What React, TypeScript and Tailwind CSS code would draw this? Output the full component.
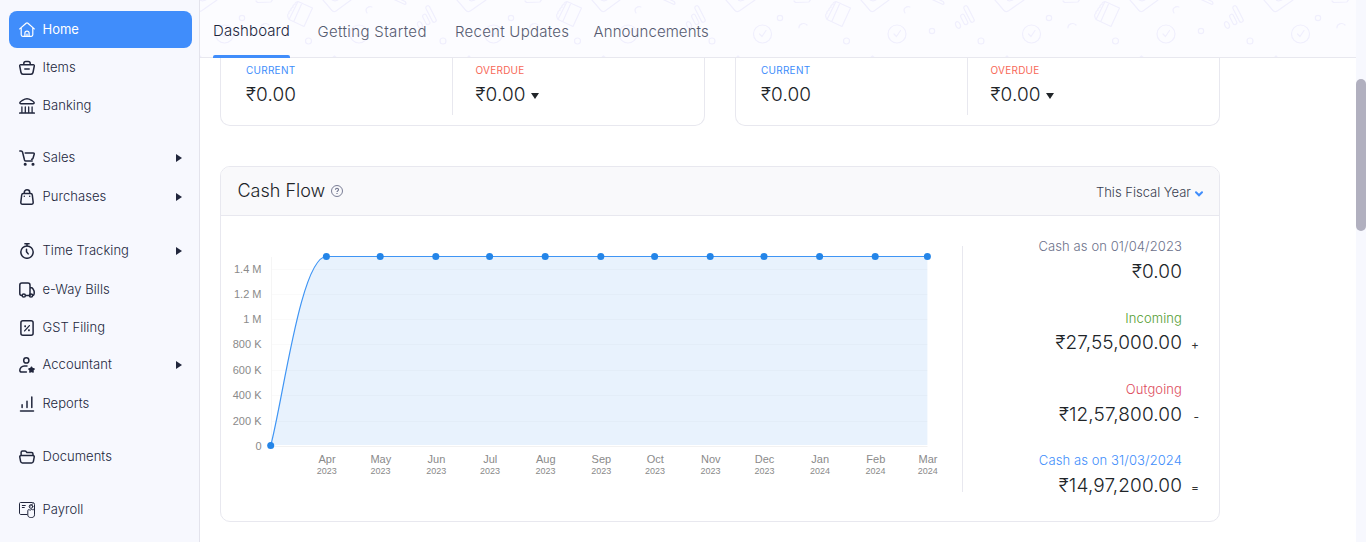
import React from "react";

type NavItem = { label: string; icon: React.ReactNode; gap?: string; arrow?: boolean; active?: boolean };

const Icon = ({ children }: { children: React.ReactNode }) => (
  <svg
    width="16"
    height="16"
    viewBox="0 0 16 16"
    fill="none"
    stroke="currentColor"
    strokeWidth="1.5"
    strokeLinecap="round"
    strokeLinejoin="round"
    className="shrink-0"
  >
    {children}
  </svg>
);

const nav: NavItem[] = [
  {
    label: "Home",
    active: true,
    icon: (
      <svg
        width="16"
        height="16"
        viewBox="0 0 16 16"
        fill="none"
        stroke="currentColor"
        strokeWidth="1.2"
        strokeLinecap="round"
        strokeLinejoin="round"
        className="shrink-0"
      >
        <path d="M.7 6.9 7.1 1.2a1.4 1.4 0 0 1 1.8 0l6.4 5.7M2.2 6v6.8c0 .9.6 1.5 1.5 1.5h8.6c.9 0 1.5-.6 1.5-1.5V6" />
        <path d="M5.9 14.1v-3c0-1.1.8-1.9 2.1-1.9s2.1.8 2.1 1.9v3M8 12v2" />
      </svg>
    ),
  },
  {
    label: "Items",
    icon: (
      <Icon>
        <path d="M1.7 4.8h12.6c.7 0 1.1.5 1 1.1l-1.3 6.6c-.2 1-1 1.7-2 1.7H4c-1 0-1.8-.7-2-1.7L.7 5.9c-.1-.6.3-1.1 1-1.1ZM4.8 4.6V3.4c0-1.1.9-2 2-2h2.4c1.1 0 2 .9 2 2v1.2M5.8 8.9h4.4" />
      </Icon>
    ),
  },
  {
    label: "Banking",
    icon: (
      <Icon>
        <path d="M.8 4.800C.8 3.600 5.400.8 8 .8s7.200 2.800 7.200 4c0 .6-.5.9-1.100.9H1.900C1.300 5.700.8 5.400.8 4.800Z" />
        <path d="M2.900 9V14.500M6.300 9V14.500M9.700 9V14.500M13.100 9V14.500" strokeWidth="1.300" />
        <path d="M.7 15.100h14.600" />
      </Icon>
    ),
  },
  {
    label: "Sales",
    arrow: true,
    gap: "mt-[14px]",
    icon: (
      <Icon>
        <path d="M.8.9h1.300c.7 0 1.200.4 1.400 1.100l2 8c.2.700.7 1.100 1.400 1.100h6.300M6.200 2.900h8c.8 0 1.200.6 1 1.300l-1.200 4c-.2.700-.7 1.100-1.400 1.100" />
        <circle cx="6.200" cy="14.200" r=".8" fill="currentColor" />
        <circle cx="14" cy="14.200" r=".8" fill="currentColor" />
      </Icon>
    ),
  },
  {
    label: "Purchases",
    arrow: true,
    gap: "mt-px",
    icon: (
      <Icon>
        <path d="M4.300 4.600h7.400c.8 0 1.500.6 1.600 1.400l.9 7.300c.1 1.100-.6 1.900-1.700 1.900h-9c-1.100 0-1.800-.8-1.700-1.900L2.700 6c.1-.8.8-1.400 1.600-1.400ZM5.300 4.400V3.300C5.300 1.900 6.500.8 8 .8s2.700 1.100 2.700 2.500v1.100M5.300 7.200v.1M10.700 7.200v.1" />
      </Icon>
    ),
  },
  {
    label: "Time Tracking",
    arrow: true,
    gap: "mt-[16px]",
    icon: (
      <Icon>
        <circle cx="8" cy="9.100" r="6.200" />
        <path d="M5.900.8h4.200M8 1v1.700M7.500 6.200v2.500l1.700 2.200" />
      </Icon>
    ),
  },
  {
    label: "e-Way Bills",
    gap: "mt-px",
    icon: (
      <Icon>
        <path d="M2.900 13.400C1.500 13.300.8 12.700.8 11.400V3.200c0-1.300.8-2.100 2.100-2.100h6c1.300 0 2.100.8 2.100 2.100v10.200H6.700M11.200 5.800h1.300c.6 0 1 .3 1.300.8l1.100 2c.2.400.3.700.3 1.100v1.800c0 1.200-.5 1.700-1.300 1.900" />
        <circle cx="4.800" cy="13.500" r="1.600" />
        <circle cx="12" cy="13.500" r="1.600" />
      </Icon>
    ),
  },
  {
    label: "GST Filing",
    icon: (
      <Icon>
        <rect x="1.900" y=".8" width="12.200" height="14.400" rx="2" />
        <path d="m5.600 10.900 4.800-5.300" strokeWidth="1.300" />
        <path d="M5.800 5.900h.7v.7h-.7zM9.600 9.900h.7v.7h-.7z" strokeWidth="1.100" />
      </Icon>
    ),
  },
  {
    label: "Accountant",
    arrow: true,
    gap: "-mt-px mb-px",
    icon: (
      <Icon>
        <circle cx="7.300" cy="3.400" r="2.600" />
        <path d="M8 8.900H5.300C2.900 8.900.8 11 .8 13.200c0 1.100.7 1.800 1.800 1.800h4.800" />
        <path
          d="m12.500 10.200.9 1.400 1.700.4-1.200 1.300.2 1.700-1.600-.6-1.600.6.2-1.700-1.200-1.300 1.700-.4Z"
          fill="currentColor"
        />
      </Icon>
    ),
  },
  {
    label: "Reports",
    icon: (
      <Icon>
        <path d="M1.500 14.900h13M3.100 8.700v2.800M8 5.200v6.300M12.800.9v10.600" />
      </Icon>
    ),
  },
  {
    label: "Documents",
    gap: "mt-[15px]",
    icon: (
      <Icon>
        <path d="M2.100 6.300V3.400c0-.9.600-1.500 1.500-1.500h2.300c.5 0 .9.200 1.200.6l.8 1h4.600c.9 0 1.500.6 1.500 1.500v1.300M2.100 6.500h11.800c1 0 1.500.8 1.300 1.600l-.8 4.300c-.2 1-.9 1.500-1.800 1.500H3.400c-.9 0-1.600-.5-1.800-1.500L.8 8.100c-.2-.8.300-1.600 1.300-1.600Z" />
      </Icon>
    ),
  },
  {
    label: "Payroll",
    gap: "mt-[15px]",
    icon: (
      <svg
        width="16"
        height="16"
        viewBox="0 0 16 16"
        fill="none"
        stroke="currentColor"
        strokeWidth="1"
        strokeLinecap="round"
        strokeLinejoin="round"
        className="shrink-0"
      >
        <path d="M8 12.500H2c-.9 0-1.500-.5-1.500-1.400V1.500C.5.900.9.500 1.500.5h12c1.300 0 2 .8 2 2v10.300c0 1.700-1.100 2.700-2.800 2.700h-1.200c-1.600 0-2.700-1-2.700-2.600V8.700c0-.7.400-1.100 1-1.100.8 0 .9.600 1.400.6.700 0 .7-.9 1.500-.9.800 0 .8.800 1.400.6.800-.3 1.400-.9 1.400-1.900" />
        <path d="M3.300 3.500h3M3.300 5.500h2" />
        <circle cx="12" cy="4.500" r="1.800" />
        <path d="m11 4.500 3-3" />
      </svg>
    ),
  },
];

const Sidebar = () => (
  <aside className="flex w-[200px] shrink-0 flex-col border-r border-[#e3e3ec] bg-[#f7f8fe] pt-[11px] pr-[7px] pl-[9px] text-[#21263c]">
    {nav.map((n) =>
      n.active ? (
        <a key={n.label} className="mb-px flex h-[37px] items-center gap-[7.500px] rounded-lg bg-[#408dfb] pl-[10px] text-[13px] font-normal text-white">
          {n.icon}
          {n.label}
        </a>
      ) : (
        <a key={n.label} className={"flex h-[38px] shrink-0 items-center gap-[7.500px] pl-[10px] text-[13px] font-[350] tracking-[0.050px] " + (n.gap ?? "")}>
          {n.icon}
          <span className="grow">{n.label}</span>
          {n.arrow && (
            <svg width="6" height="8" viewBox="0 0 6 8" className="mr-[10px]" fill="currentColor">
              <path d="M0 0v8l6-4z" />
            </svg>
          )}
        </a>
      ),
    )}
  </aside>
);

const HeaderPattern = () => (
  <svg className="absolute inset-0" width="1156" height="57" fill="none" stroke="#f0effd" strokeWidth="1.200" strokeLinecap="round" strokeLinejoin="round">
    <defs>
      <pattern id="doodles" width="269" height="57" patternUnits="userSpaceOnUse">
        <circle cx="24.500" cy="34" r="9" />
        <path d="m21.500 34 2.500 2.500 4-6" />
        <circle cx="42" cy="18" r="2.700" />
        <path d="M61 28c-.5-4 5-6 8-3M56 1l1.500 1.500L71 2l2-3" />
        <path d="m98 1.500 14.500 6.500-8.500 18.500-15-7ZM98 1.500c-2 .5-3.500 1.500-3 3-2 0-2.500 2-2 3-2 0-2.500 2-2 3-2 0-2.500 2-2 3-2 0-1.500 4 0 6M102 3l-8 18" />
        <circle cx="108.500" cy="41" r="3" />
        <path d="m123 0 9 10.500q2 2 4 .5l15-11M132 0l3 1 3-1" />
        <circle cx="159" cy="34" r="9" />
        <path d="m156 34 2.500 2.500 4-6M167 13c-3-5 2-7 5-6" />
        <circle cx="194" cy="31" r="2.700" />
        <path d="m193-1 12 5.500c1.500-.5 1-2 0-3L200-1" />
        <ellipse cx="220" cy="25" rx="2.200" ry="3.500" transform="rotate(-25 220 25)" />
        <rect x="224" y="14" width="4" height="11" rx="2" transform="rotate(-27 226 19)" />
        <rect x="229" y="5" width="4" height="18" rx="2" transform="rotate(-27 231 14)" />
        <circle cx="243" cy="41" r="3" />
        <path d="m257 0 9 10.500q2 2 4 .5M-3 10.500q2 2 5 0L17 0M0 0l2.500 1L6 0" />
        <path d="m-2 58 2-2 2 2zM132 58l2.500-2 2.500 2zM267 58l2-2 2 2z" fill="#f0effd" />
      </pattern>
    </defs>
    <rect width="1156" height="57" fill="url(#doodles)" stroke="none" />
  </svg>
);

const Header = () => (
  <header className="relative h-[58px] shrink-0 border-b border-[#e8e8ef] bg-[#fcfcff]">
    <HeaderPattern />
    <nav className="relative flex h-[58px] pl-[13px] text-[15px] font-[350] text-[#565b70]">
      <a className="mr-[27.500px] h-[58px] w-[77px] pt-[20px] leading-[22px] tracking-[0.100px] whitespace-nowrap text-[#21263c]">
        Dashboard
        <span className="mt-[13px] block h-[3px] rounded-t-[2px] bg-[#408dfb]" />
      </a>
      <a className="mr-[28px] w-[109.500px] pt-[21px] leading-[22px] tracking-[0.350px] whitespace-nowrap">Getting Started</a>
      <a className="mr-[25px] w-[113.500px] pt-[21px] leading-[22px] tracking-[0.250px] whitespace-nowrap">Recent Updates</a>
      <a className="pt-[21px] leading-[22px] tracking-[0.100px] whitespace-nowrap">Announcements</a>
    </nav>
  </header>
);

const BalanceCard = () => (
  <div className="flex h-[68px] w-[485px] rounded-b-[10px] border border-t-0 border-[#e8e8ef]">
    <div className="h-[57px] w-[232px] border-r border-[#e8e8ef] pt-[5px] pl-[25px]">
      <div className="text-[10px] leading-[14px] tracking-[0.250px] text-[#408dfb]">CURRENT</div>
      <div className="mt-[6px] text-[19px] leading-[24px] font-[350] tracking-[0.150px]">₹0.00</div>
    </div>
    <div className="pt-[5px] pl-[22.500px]">
      <div className="text-[10px] leading-[14px] tracking-[0.250px] text-[#f76858]">OVERDUE</div>
      <div className="mt-[6px] flex items-center gap-[5px] text-[19px] leading-[24px] font-[350] tracking-[0.150px]">
        ₹0.00
        <svg width="8" height="6" viewBox="0 0 8 6" className="mt-[2px]" fill="currentColor">
          <path d="M0 0h8L4 6z" />
        </svg>
      </div>
    </div>
  </div>
);

const yTicks: [string, number][] = [
  ["1.4 M", 53],
  ["1.2 M", 78],
  ["1 M", 103],
  ["800 K", 128],
  ["600 K", 154],
  ["400 K", 179],
  ["200 K", 205],
  ["0", 230],
];

const months: [string, string, number][] = [
  ["Apr", "2023", 105.4],
  ["May", "2023", 159.2],
  ["Jun", "2023", 214.8],
  ["Jul", "2023", 268.6],
  ["Aug", "2023", 324.2],
  ["Sep", "2023", 379.8],
  ["Oct", "2023", 433.6],
  ["Nov", "2023", 489.2],
  ["Dec", "2023", 543],
  ["Jan", "2024", 598.6],
  ["Feb", "2024", 654.2],
  ["Mar", "2024", 706.4],
];

const CashChart = () => (
  <svg width="741" height="304" className="shrink-0 font-['Liberation_Sans',sans-serif]">
    <path d="M49.700 229C62 184 80 40.500 105.400 40.500H706.400V229Z" fill="#e8f2fd" />
    {yTicks.map(([label, y]) => (
      <g key={label}>
        <line x1="50" x2="706.500" y1={y + 0.5} y2={y + 0.5} stroke="#000" strokeOpacity={label === "0" ? 0.05 : 0.02} />
        <text x="40.500" y={y + 4} textAnchor="end" fontSize="11" fill="#8a8a8a">
          {label}
        </text>
      </g>
    ))}
    <line x1="50.500" x2="50.500" y1="41" y2="230" stroke="#f5f5f5" />
    <path d="M49.700 229.500C62 184 80 40.500 105.400 40.500H706.400" fill="none" stroke="#3f95f4" strokeWidth="1.200" />
    <circle cx="49.700" cy="229.500" r="3.500" fill="#2485e8" />
    {months.map(([month, year, x]) => (
      <g key={month} textAnchor="middle" fill="#8a8a8a">
        <circle cx={x} cy="40.500" r="3.500" fill="#2485e8" />
        <text x={x + 0.6} y="247" fontSize="11">
          {month}
        </text>
        <text x={x + 0.4} y="258" fontSize="9">
          {year}
        </text>
      </g>
    ))}
  </svg>
);

type TotalProps = { label: string; tone: string; value: string; sign?: string; gap: string; lead: string };

const Total = ({ label, tone, value, sign, gap, lead }: TotalProps) => (
  <div className={"text-right font-[350] " + gap}>
    <div className={"pr-[17px] text-[13px] leading-[18px] tracking-[0.100px] " + tone}>{label}</div>
    <div className={"flex items-baseline justify-end " + lead}>
      <span className="text-[19px] leading-[26px] tracking-[0.120px]">{value}</span>
      <span className="w-[17px] text-[12px] leading-[16px] font-normal text-[#333]">{sign}</span>
    </div>
  </div>
);

const CashFlow = () => (
  <section className="mt-[40px] flex h-[356px] w-[1000px] flex-col rounded-[10px] border border-[#e8e8ef]">
    <div className="flex h-[49px] shrink-0 items-center rounded-t-[9px] border-b border-[#e8e8ef] bg-[#f9f9fb] pr-[16px] pl-[16.500px]">
      <h2 className="-mt-px text-[18px] font-[350]">Cash Flow</h2>
      <svg width="12" height="12" viewBox="0 0 12 12" className="ml-[6px]" fill="none" stroke="#6c718a" strokeWidth=".9">
        <circle cx="6" cy="6" r="5.500" />
        <path d="M4.500 4.800c0-2 3-2 3 0 0 1-1.500 1.100-1.500 2.200M6 8v1" strokeWidth="1.100" />
      </svg>
      <span className="mt-[3px] ml-auto text-[13px] font-[350] text-[#383d4f]">This Fiscal Year</span>
      <svg width="8" height="6" viewBox="0 0 8 6" className="mt-[5px] ml-1" fill="none" stroke="#408dfb" strokeWidth="2" strokeLinecap="round">
        <path d="m1 1.300 3 3 3-3" />
      </svg>
    </div>
    <div className="flex grow">
      <CashChart />
      <div className="mt-[30px] h-[246px] w-px bg-[#e8e8ef]" />
      <div className="flex grow flex-col pt-[21px] pr-[20px]">
        <Total gap="" lead="mt-[4px]" label="Cash as on 01/04/2023" tone="text-[#6c718a]" value="₹0.00" />
        <Total gap="mt-[24px]" lead="mt-[3px]" label="Incoming" tone="text-[#539d31]" value="₹27,55,000.00" sign="+" />
        <Total gap="mt-[24px]" lead="mt-[4px]" label="Outgoing" tone="text-[#dd4b5c]" value="₹12,57,800.00" sign="-" />
        <Total gap="mt-[23px]" lead="mt-[4px]" label="Cash as on 31/03/2024" tone="text-[#408dfb]" value="₹14,97,200.00" sign="=" />
      </div>
    </div>
  </section>
);

export default function App() {
  return (
    <div className="flex h-[542px] w-[1366px] overflow-hidden bg-white font-['Inter',sans-serif] text-[#212529]">
      <Sidebar />
      <main className="flex w-[1156px] shrink-0 flex-col">
        <Header />
        <div className="flex flex-col pl-[20px]">
          <div className="flex gap-[30px]">
            <BalanceCard />
            <BalanceCard />
          </div>
          <CashFlow />
        </div>
      </main>
      <div className="w-[10px] shrink-0 bg-[#f7f8fe] pt-[79px]">
        <div className="h-[152px] rounded-[5px] bg-[#b1b0bf]" />
      </div>
    </div>
  );
}
